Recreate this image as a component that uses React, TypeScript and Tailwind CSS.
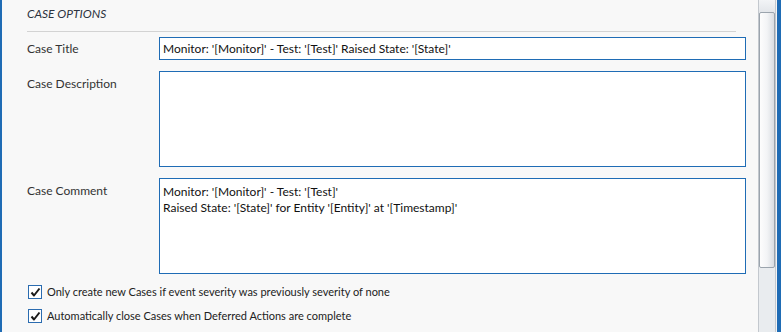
import React from 'react';

const font = { fontFamily: 'Lato, "Noto Sans", sans-serif' };

// Small checked box, drawn like the classic Windows checkbox
const CheckBox = () => (
  <span className="flex h-[14px] w-[14px] shrink-0 items-center justify-center border border-[#2b6cb0] bg-white">
    <svg width="11" height="11" viewBox="0 0 11 11" fill="none">
      <path d="M1.5 5.5L4 8.5L9.5 1.5" stroke="#1a1a1a" strokeWidth="2" strokeLinejoin="round" />
    </svg>
  </span>
);

const Field = ({ label, children, top }: { label: string; children: React.ReactNode; top?: boolean }) => (
  <div className={`flex ${top ? 'items-start' : 'items-center'}`}>
    <div className={`w-[132px] shrink-0 text-[12px] leading-[16px] text-[#333] ${top ? 'pt-[5px]' : ''}`}>{label}</div>
    {children}
  </div>
);

export default function App() {
  return (
    <div className="flex h-[332px] w-[781px] overflow-hidden bg-[#f8f8f8]" style={font}>
      {/* left window edge */}
      <div className="w-[2px] shrink-0 bg-[#1f6cb5]" />

      {/* form */}
      <div className="flex-1 pl-[25px]">
        <div className="mr-[22px] h-[32px] border-b border-[#d3d3d3] pt-[6px] text-[12px] italic leading-[16px] text-[#2d3440]">
          CASE OPTIONS
        </div>

        <div className="mt-[5px] flex flex-col gap-[11px]">
          <Field label="Case Title">
            <div className="flex h-[23px] w-[587px] items-center border border-[#1f6cb5] bg-white px-[3px] text-[12px] text-[#111]">
              Monitor: '[Monitor]' - Test: '[Test]' Raised State: '[State]'
            </div>
          </Field>

          <Field label="Case Description" top>
            <div className="h-[96px] w-[587px] border border-[#1f6cb5] bg-white" />
          </Field>

          <Field label="Case Comment" top>
            <div className="h-[96px] w-[587px] border border-[#1f6cb5] bg-white px-[3px] pt-[5px] text-[12px] leading-[16px] text-[#111]">
              <div>Monitor: '[Monitor]' - Test: '[Test]'</div>
              <div>Raised State: '[State]' for Entity '[Entity]' at '[Timestamp]'</div>
            </div>
          </Field>
        </div>

        <div className="mt-[11px] flex flex-col gap-[10px] pl-[1px]">
          <label className="flex items-center gap-[5px] text-[11px] leading-[14px] text-[#222]">
            <CheckBox />
            Only create new Cases if event severity was previously severity of none
          </label>
          <label className="flex items-center gap-[5px] text-[11px] leading-[14px] text-[#222]">
            <CheckBox />
            Automatically close Cases when Deferred Actions are complete
          </label>
        </div>
      </div>

      {/* scrollbar */}
      <div className="flex w-[18px] shrink-0 flex-col border-x border-[#c3c8ce] bg-[#e9ecef]">
        <div className="h-[12px] bg-gradient-to-b from-[#f2f4f6] to-[#e3e6ea]" />
        <div className="h-[256px] rounded-[2px] border border-[#9ba4ad] bg-gradient-to-r from-[#fdfdfd] via-[#f3f4f6] to-[#d9dde2]" />
      </div>
      <div className="w-[1px] shrink-0 bg-[#f4f4f4]" />
      {/* right window edge */}
      <div className="w-[4px] shrink-0 bg-[#1f6cb5]" />
    </div>
  );
}
